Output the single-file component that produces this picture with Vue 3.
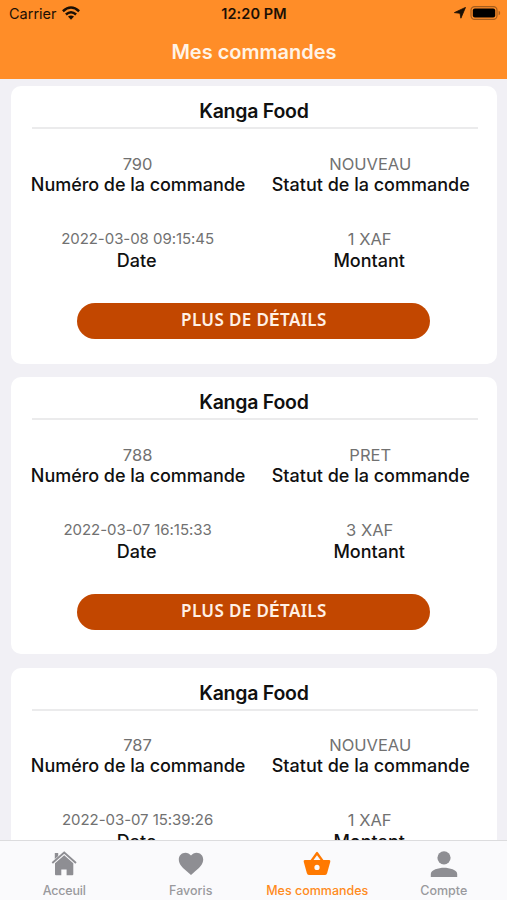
<script setup>
const orders = [
  { id: '790', status: 'NOUVEAU', date: '2022-03-08 09:15:45', amount: '1 XAF' },
  { id: '788', status: 'PRET', date: '2022-03-07 16:15:33', amount: '3 XAF' },
  { id: '787', status: 'NOUVEAU', date: '2022-03-07 15:39:26', amount: '1 XAF' },
]
</script>

<template>
  <div class="screen">
    <header class="header">
      <div class="status">
        <div class="side">
          <span class="carrier">Carrier</span>
          <svg class="wifi" viewBox="0 0 18 14" width="18" height="14">
            <g fill="none" stroke="#1c1005" stroke-width="2.5">
              <path d="M0.9 5.2Q9 -2.1 17.1 5.2" />
              <path d="M3.9 8.5Q9 3.9 14.1 8.5" />
            </g>
            <path d="M6 10.6Q9 8.2 12 10.6L9 13.7Z" fill="#1c1005" />
          </svg>
        </div>
        <span class="time">12:20 PM</span>
        <div class="side right">
          <svg viewBox="0 0 12 12" width="12" height="12"><path d="M11.5 0.4L6.9 11.2L6 6.3L0.4 5.6Z" fill="#1c1005" stroke="#1c1005" stroke-width=".8" stroke-linejoin="round" /></svg>
          <svg class="battery" viewBox="0 0 31 14" width="31" height="14">
            <rect x="1" y=".6" width="26" height="12.8" rx="3.6" fill="none" stroke="#a55d1d" stroke-width="1.2" />
            <rect x="2.8" y="2.4" width="22.4" height="9.2" rx="2" fill="#000" />
            <path d="M28.6 4.8Q30.2 5.3 30.2 7T28.6 9.2Z" fill="#a55d1d" />
          </svg>
        </div>
      </div>
      <h1>Mes commandes</h1>
    </header>

    <main class="list">
      <article v-for="order in orders" :key="order.id" class="card">
        <h2>Kanga Food</h2>
        <div class="grid">
          <div class="cell">
            <span class="value">{{ order.id }}</span>
            <span class="label numero">Numéro de la commande</span>
          </div>
          <div class="cell">
            <span class="value">{{ order.status }}</span>
            <span class="label statut">Statut de la commande</span>
          </div>
          <div class="cell">
            <span class="value date">{{ order.date }}</span>
            <span class="label low">Date</span>
          </div>
          <div class="cell">
            <span class="value amount">{{ order.amount }}</span>
            <span class="label low">Montant</span>
          </div>
        </div>
        <button type="button">PLUS DE D<b>É</b>TAILS</button>
      </article>
    </main>

    <nav class="tabs">
      <div class="tab accueil">
        <svg viewBox="0 0 28 28" width="28" height="28">
          <path d="M2.3 14L14.2 3.5L26 14" fill="none" stroke="#8e8e93" stroke-width="1.9" />
          <path d="M4.8 4.1H8.2V7L4.8 10ZM14.2 6.3L23.3 14.3V25.2Q23.3 26.2 22.3 26.2H16.6V20.4H11.3V26.2H6Q5 26.2 5 25.2V14.3Z" fill="#8e8e93" />
        </svg>
        <span>Acceuil</span>
      </div>
      <div class="tab">
        <svg viewBox="0 0 28 28" width="28" height="28">
          <path d="M14 26L12 24.3C5.8 18.9 1.8 15.5 1.8 10.5C1.8 6.6 4.8 3.8 8.4 3.8C10.6 3.8 12.7 4.9 14 6.6C15.3 4.9 17.4 3.8 19.6 3.8C23.2 3.8 26.2 6.6 26.2 10.5C26.2 15.5 22.2 18.9 16 24.3Z" fill="#8e8e93" />
        </svg>
        <span>Favoris</span>
      </div>
      <div class="tab active">
        <svg viewBox="0 0 28 28" width="28" height="28">
          <path fill-rule="evenodd" d="M13 3.4Q14 2.3 15 3.4L20.4 11.1H26.2Q27.7 11.2 27.3 12.7L24.1 24.2Q23.5 26.1 21.6 26.1H6.4Q4.5 26.1 3.9 24.2L.7 12.7Q.3 11.2 1.8 11.1H7.6ZM14 6.2L10.5 11.1H17.5ZM14 15.8A2.6 2.6 0 1 0 14 21A2.6 2.6 0 1 0 14 15.8Z" fill="#ff7900" />
        </svg>
        <span>Mes commandes</span>
      </div>
      <div class="tab">
        <svg viewBox="0 0 28 28" width="28" height="28">
          <circle cx="14" cy="8.8" r="6.6" fill="#8e8e93" />
          <path d="M.8 28V25C.8 20.8 8.5 18.7 14 18.7S27.2 20.8 27.2 25V28Z" fill="#8e8e93" />
        </svg>
        <span>Compte</span>
      </div>
    </nav>
  </div>
</template>

<style>
body { margin: 0; overflow: hidden; }
</style>

<style scoped>
.screen {
  width: 507px;
  height: 900px;
  overflow: hidden;
  display: flex;
  flex-direction: column;
  background: #f1f0f5;
  color: #101010;
  font-family: Inter, "Liberation Sans", sans-serif;
}
.header {
  height: 79px;
  flex: none;
  background: #ff8d28;
}
.status {
  height: 27px;
  padding: 0 6px 0 9px;
  display: grid;
  grid-template-columns: 1fr auto 1fr;
  align-items: center;
  color: #1c1005;
}
.side { display: flex; align-items: center; gap: 6px; }
.right { justify-content: flex-end; gap: 4px; }
.carrier { font-size: 14.5px; line-height: 27px; }
.wifi { margin: 0 0 2px -1px; }
.right svg { margin-bottom: 1px; }
.time { font-size: 14.5px; font-weight: 600; line-height: 27px; letter-spacing: 0.1px; margin-right: 2px; }
h1 {
  margin: 0;
  padding: 12px 0 0 1px;
  font-size: 20px;
  line-height: 27px;
  font-weight: 600;
  text-align: center;
  color: #fff3e6;
}
.list {
  flex: 1;
  min-height: 0;
  overflow: hidden;
  padding: 7.3px 9.7px 0 10.5px;
  display: flex;
  flex-direction: column;
  gap: 13.3px;
}
.card {
  flex: none;
  box-sizing: border-box;
  height: 277.4px;
  padding: 0 10.8px;
  border-radius: 10px;
  background: #fff;
}
h2 {
  margin: 0 9px 0 11px;
  padding-top: 10px;
  height: 31px;
  border-bottom: 2px solid #ebebec;
  font-size: 19.5px;
  line-height: 30px;
  font-weight: 600;
  letter-spacing: -0.25px;
  text-indent: -2px;
  text-align: center;
}
.grid {
  display: grid;
  grid-template-columns: 1fr 1fr;
  grid-template-rows: 75px 75px;
  padding-top: 23.6px;
}
.cell { display: flex; flex-direction: column; align-items: center; }
.value { font-size: 16.5px; line-height: 22px; color: #717171; }
.date { font-size: 15px; letter-spacing: -0.05px; }
.amount { padding-right: 1px; }
.label { font-size: 18px; line-height: 20px; font-weight: 500; white-space: nowrap; }
.numero { letter-spacing: -0.04px; padding-left: 1px; }
.statut { padding-left: 1px; }
.low { padding: 1px 2px 0 0; }
button {
  display: block;
  width: 353px;
  height: 36px;
  margin: 0.4px auto 0;
  padding: 0 0 2px;
  border: 0;
  border-radius: 18px;
  background: #c24700;
  color: #fff0e5;
  font: 600 17px/32px "Noto Sans", sans-serif;
  letter-spacing: 0.38px;
}
button b { font-family: Inter, sans-serif; font-weight: 700; }
.tabs {
  height: 59px;
  flex: none;
  border-top: 1px solid #dcdcde;
  background: #fafafc;
  display: grid;
  grid-template-columns: repeat(4, 126.5px);
  padding-left: 1px;
}
.tab {
  display: flex;
  flex-direction: column;
  align-items: center;
  padding-top: 8px;
  font-size: 12.5px;
  line-height: 16px;
  font-weight: 500;
  color: #99999d;
}
.tab span { padding-top: 6px; white-space: nowrap; }
.accueil span { letter-spacing: -0.2px; }
.active { color: #ff8a20; }
</style>
